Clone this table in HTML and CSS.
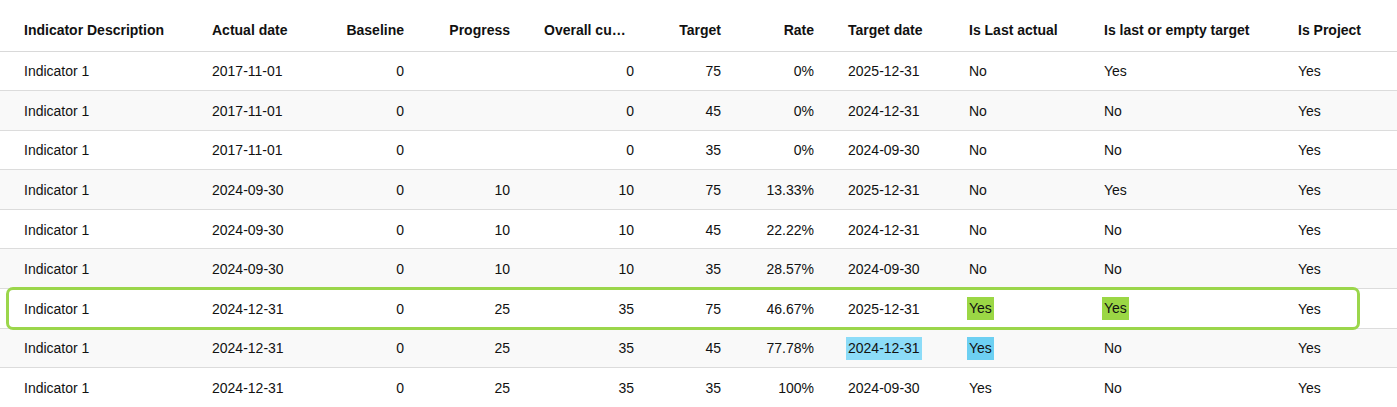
FILE: index.html
```html
<!DOCTYPE html>
<html>
<head>
<meta charset="utf-8">
<link rel="stylesheet" href="styles.css">
</head>
<body>
<table class="grid">
  <colgroup>
    <col class="c1"><col class="c2"><col class="c3"><col class="c4"><col class="c5"><col class="c6"><col class="c7"><col class="c8"><col class="c9"><col class="c10"><col class="c11">
  </colgroup>
  <thead>
    <tr>
      <th class="first">Indicator Description</th>
      <th>Actual date</th>
      <th class="num">Baseline</th>
      <th class="num">Progress</th>
      <th class="clip">Overall cumulative</th>
      <th class="num">Target</th>
      <th class="num">Rate</th>
      <th>Target date</th>
      <th>Is Last actual</th>
      <th>Is last or empty target</th>
      <th>Is Project</th>
    </tr>
  </thead>
  <tbody>
    <tr><td class="first">Indicator 1</td><td>2017-11-01</td><td class="num">0</td><td class="num"></td><td class="num">0</td><td class="num">75</td><td class="num">0%</td><td>2025-12-31</td><td>No</td><td>Yes</td><td>Yes</td></tr>
    <tr><td class="first">Indicator 1</td><td>2017-11-01</td><td class="num">0</td><td class="num"></td><td class="num">0</td><td class="num">45</td><td class="num">0%</td><td>2024-12-31</td><td>No</td><td>No</td><td>Yes</td></tr>
    <tr><td class="first">Indicator 1</td><td>2017-11-01</td><td class="num">0</td><td class="num"></td><td class="num">0</td><td class="num">35</td><td class="num">0%</td><td>2024-09-30</td><td>No</td><td>No</td><td>Yes</td></tr>
    <tr><td class="first">Indicator 1</td><td>2024-09-30</td><td class="num">0</td><td class="num">10</td><td class="num">10</td><td class="num">75</td><td class="num">13.33%</td><td>2025-12-31</td><td>No</td><td>Yes</td><td>Yes</td></tr>
    <tr><td class="first">Indicator 1</td><td>2024-09-30</td><td class="num">0</td><td class="num">10</td><td class="num">10</td><td class="num">45</td><td class="num">22.22%</td><td>2024-12-31</td><td>No</td><td>No</td><td>Yes</td></tr>
    <tr><td class="first">Indicator 1</td><td>2024-09-30</td><td class="num">0</td><td class="num">10</td><td class="num">10</td><td class="num">35</td><td class="num">28.57%</td><td>2024-09-30</td><td>No</td><td>No</td><td>Yes</td></tr>
    <tr class="selected"><td class="first"><div class="sel-box"></div>Indicator 1</td><td>2024-12-31</td><td class="num">0</td><td class="num">25</td><td class="num">35</td><td class="num">75</td><td class="num">46.67%</td><td>2025-12-31</td><td><span class="mark green">Yes</span></td><td><span class="mark green">Yes</span></td><td>Yes</td></tr>
    <tr><td class="first">Indicator 1</td><td>2024-12-31</td><td class="num">0</td><td class="num">25</td><td class="num">35</td><td class="num">45</td><td class="num">77.78%</td><td><span class="mark blue-light">2024-12-31</span></td><td><span class="mark blue">Yes</span></td><td>No</td><td>Yes</td></tr>
    <tr><td class="first">Indicator 1</td><td>2024-12-31</td><td class="num">0</td><td class="num">25</td><td class="num">35</td><td class="num">35</td><td class="num">100%</td><td>2024-09-30</td><td>Yes</td><td>No</td><td>Yes</td></tr>
  </tbody>
</table>
</body>
</html>
```

FILE: styles.css
```css
html, body {
  margin: 0;
  padding: 0;
  background: #ffffff;
}

body {
  font-family: "Liberation Sans", Arial, sans-serif;
  font-size: 14px;
  color: #111111;
  overflow: hidden;
}

.grid {
  width: 1397px;
  border-collapse: collapse;
  table-layout: fixed;
}

.c1 { width: 195px; }
.c2 { width: 135px; }
.c3 { width: 91px; }
.c4 { width: 106px; }
.c5 { width: 124px; }
.c6 { width: 87px; }
.c7 { width: 93px; }
.c8 { width: 121px; }
.c9 { width: 135px; }
.c10 { width: 194px; }
.c11 { width: 116px; }

.grid th {
  font-weight: bold;
  text-align: left;
  height: 51px;
  box-sizing: border-box;
  padding: 22px 17px 12px;
  line-height: 16px;
  vertical-align: top;
  white-space: nowrap;
  overflow: visible;
  border-bottom: 1px solid #d9d9d9;
}

.grid th.clip {
  overflow: hidden;
  text-overflow: ellipsis;
}

.grid th.num {
  padding-left: 10px;
}

.grid td {
  height: 39.6px;
  box-sizing: border-box;
  padding: 1px 17px 0;
  line-height: 16px;
  vertical-align: middle;
  white-space: nowrap;
  border-bottom: 1px solid #dcdcdc;
}

.grid .first {
  padding-left: 24px;
}

.grid .num {
  text-align: right;
}

.grid tbody tr:nth-child(even) td {
  background: #f9f9f9;
}

.grid tbody tr.selected td {
  background: transparent;
}

.grid td.first {
  position: relative;
}

.sel-box {
  position: absolute;
  left: 6px;
  top: -2px;
  bottom: -2px;
  width: 1354px;
  box-sizing: border-box;
  border: 3px solid #9bd64b;
  border-radius: 7px;
  pointer-events: none;
  z-index: 1;
}

.mark {
  display: inline-block;
  padding: 3px 2px;
  margin-left: -2px;
  line-height: 17px;
}

.mark.green { background: #9bd745; }
.mark.blue { background: #6dd0f2; }
.mark.blue-light { background: #8cdcf8; }
```
